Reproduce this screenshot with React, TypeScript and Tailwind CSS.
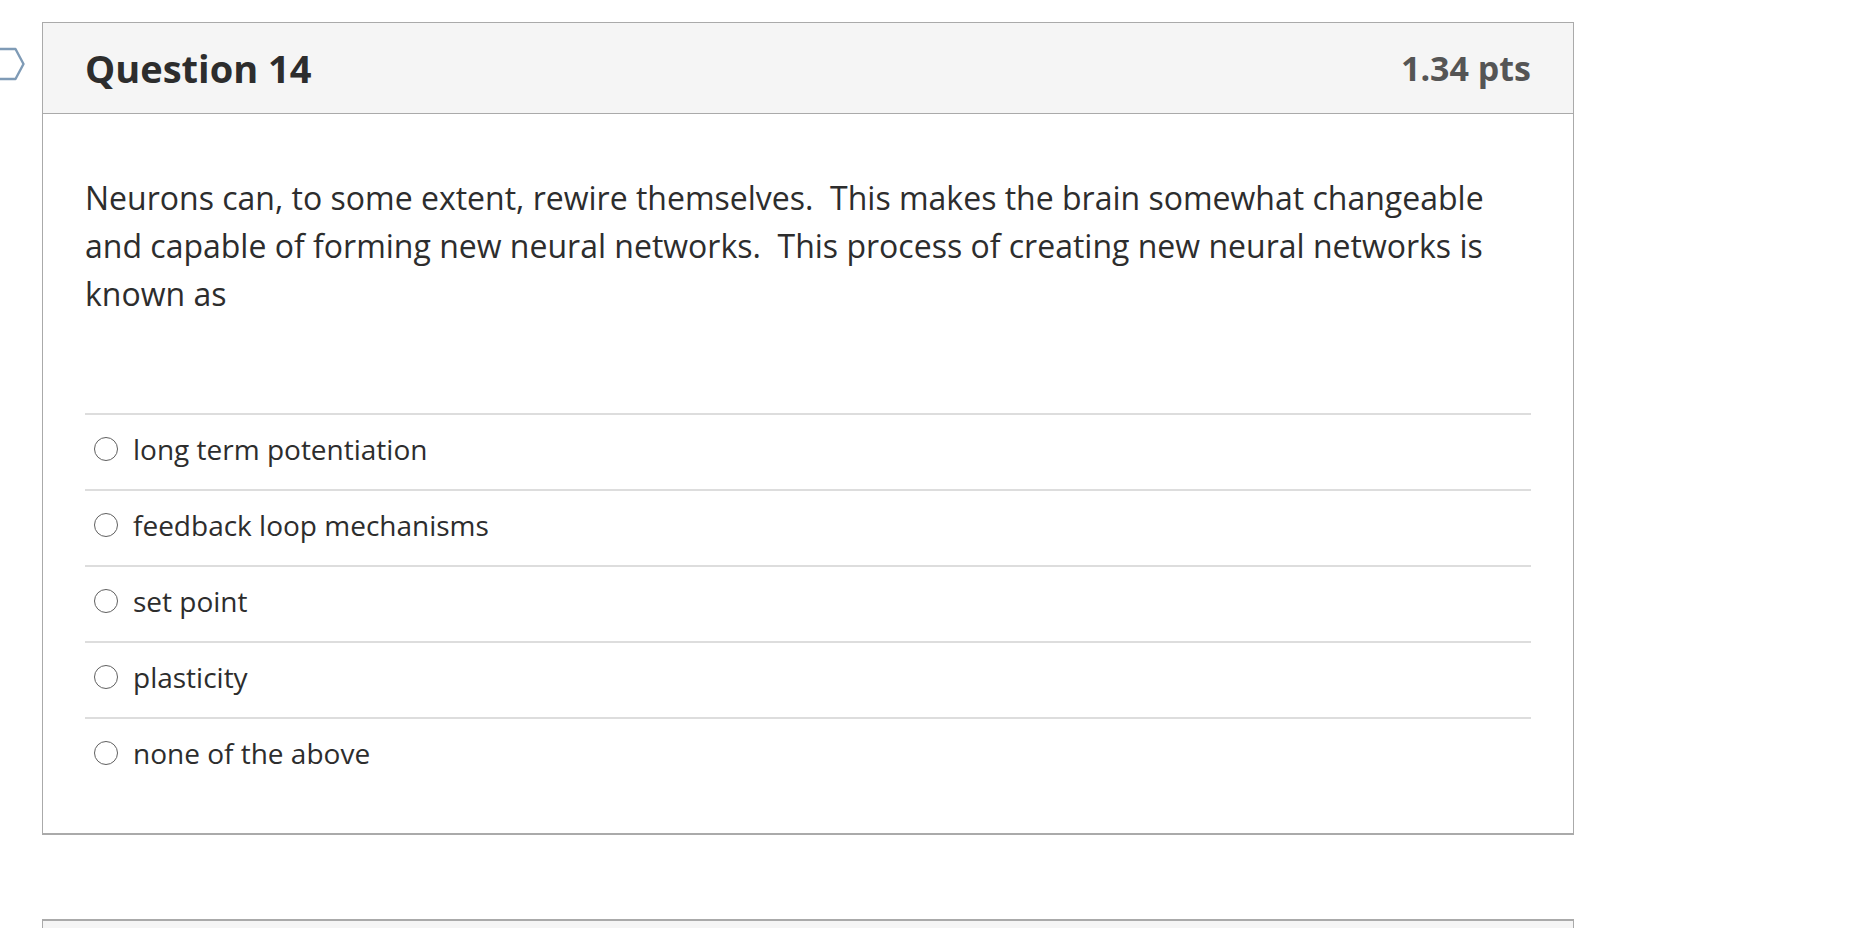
import React from "react";

const answers = [
  "long term potentiation",
  "feedback loop mechanisms",
  "set point",
  "plasticity",
  "none of the above",
];

export default function App() {
  return (
    <div
      className="relative h-[928px] bg-white pt-[22px] pl-[42px] overflow-hidden"
      style={{ fontFamily: '"Open Sans", "Noto Sans", sans-serif' }}
    >
      {/* flag marker */}
      <svg
        className="absolute left-0 top-[47px]"
        width="26"
        height="36"
        viewBox="0 0 26 36"
        fill="none"
      >
        <path
          d="M-6 2 H15.5 L23.5 17 L15.5 32 H-6"
          stroke="#7f9bb6"
          strokeWidth="2.4"
          strokeLinejoin="round"
        />
      </svg>

      <div className="w-[1532px] border border-b-2 border-[#aaaaaa] bg-white">
        <div className="flex h-[91px] items-center justify-between border-b border-[#aaaaaa] bg-[#f5f5f5] px-[42px] pt-[1px]">
          <h2 className="text-[38px] font-bold leading-[57px] text-[#2d2d2d]">
            Question 14
          </h2>
          <div className="text-[34px] font-bold leading-[57px] text-[#555555]">
            1.34 pts
          </div>
        </div>
        <div className="px-[42px] pt-[60px] pb-[40px]">
          <p className="text-[32px] leading-[48px] text-[#2d2d2d]">
            Neurons can, to some extent, rewire themselves.&nbsp; This makes the
            brain somewhat changeable and capable of forming new neural
            networks.&nbsp; This process of creating new neural networks is
            known as
          </p>
          <div className="mt-[95px]">
            {answers.map((a) => (
              <div
                key={a}
                className="flex h-[76px] items-center border-t-2 border-[#dddddd] pb-[6px]"
              >
                <span className="ml-[9px] mr-[15px] box-border h-[24px] w-[24px] shrink-0 rounded-full border-[1.8px] border-[#5f5f5f] bg-white" />
                <span className="text-[28px] leading-[42px] text-[#2d2d2d]">
                  {a}
                </span>
              </div>
            ))}
          </div>
        </div>
      </div>

      <div className="mt-[84px] h-[60px] w-[1532px] border-x border-t-2 border-[#aaaaaa] bg-[#f5f5f5]" />
    </div>
  );
}
